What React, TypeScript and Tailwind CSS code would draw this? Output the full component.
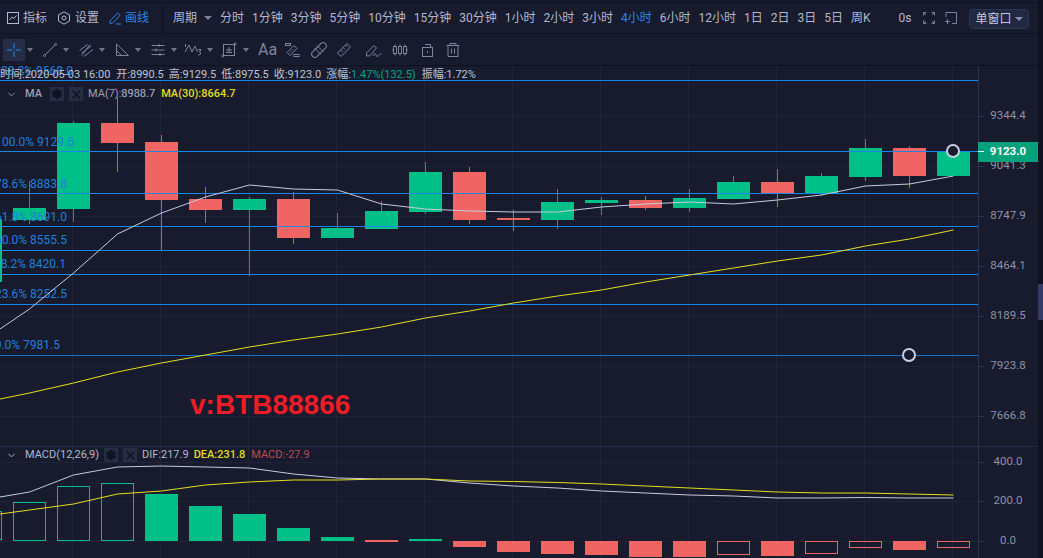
import type { ReactNode } from "react";
import { ChevronDown, Settings, X } from "lucide-react";

const periods = ["分时", "1分钟", "3分钟", "5分钟", "10分钟", "15分钟", "30分钟", "1小时", "2小时", "3小时", "4小时", "6小时", "12小时", "1日", "2日", "3日", "5日", "周K"];

const GREEN = "#00c087";
const RED = "#f06464";
const BLUE = "#1a86ea";
const YELLOW = "#e6de1e";
const WHITE_LINE = "#c8cbdd";

// x, wick top, wick bottom, body top, body bottom, up
const candles: [number, number, number, number, number, boolean][] = [
    [-31, 219, 282, 219, 282, true],
    [13, 181, 224, 208, 220, true],
    [57, 121, 222, 123, 209, true],
    [101, 97, 172, 123, 143, false],
    [145, 135, 250, 142, 200, false],
    [189, 187, 223, 199, 210, false],
    [233, 197, 276, 199, 210, true],
    [277, 192, 244, 199, 238, false],
    [321, 213, 238, 228, 238, true],
    [365, 201, 229, 211, 229, true],
    [409, 162, 214, 172, 212, true],
    [453, 167, 224, 172, 220, false],
    [497, 210, 231, 218, 220, false],
    [541, 189, 229, 202, 220, true],
    [585, 197, 215, 200, 203, true],
    [629, 196, 210, 200, 208, false],
    [673, 189, 212, 198, 208, true],
    [717, 176, 199, 182, 199, true],
    [761, 169, 207, 182, 193, false],
    [805, 173, 196, 176, 193, true],
    [849, 139, 181, 148, 177, true],
    [893, 146, 188, 148, 176, false],
    [937, 152, 176, 152, 176, true],
];

const ma7 = "0,329 29.5,309 73.5,273 117.5,234 161.5,213 205.5,197 249.5,185 293.5,189 337.5,190 381.5,204 425.5,209 469.5,211 513.5,212 557.5,212 601.5,207 645.5,204 689.5,202 733.5,204 777.5,200 821.5,195 865.5,186 909.5,184 953.5,176";
const ma30 = "0,399 29.5,393 73.5,383 117.5,372 161.5,363 205.5,355 249.5,347 293.5,340 337.5,334 381.5,327 425.5,318 469.5,311 513.5,303 557.5,296 601.5,290 645.5,282 689.5,275 733.5,268 777.5,261 821.5,255 865.5,246 909.5,239 953.5,230";
const dif = "0,497 29.5,492 73.5,475 117.5,467 161.5,466 205.5,467 249.5,468 293.5,474 337.5,478 381.5,479 425.5,479 469.5,483 513.5,486 557.5,488 601.5,491 645.5,493 689.5,495 733.5,496 777.5,498 821.5,498 865.5,497.5 909.5,498 953.5,498";
const dea = "0,514 29.5,510 73.5,504 117.5,494 161.5,491 205.5,485 249.5,482 293.5,480 337.5,480 381.5,479 425.5,479 469.5,481 513.5,481.5 557.5,482.5 601.5,484 645.5,486 689.5,488 733.5,490 777.5,492 821.5,493 865.5,493 909.5,494 953.5,495";

// x, top, bottom, up, hollow
const macdBars: [number, number, number, boolean, boolean][] = [
    [-31, 511, 540, true, true],
    [13, 502, 541, true, true],
    [57, 486, 541, true, true],
    [101, 483, 541, true, true],
    [145, 494, 541, true, false],
    [189, 506, 541, true, false],
    [233, 514, 541, true, false],
    [277, 528, 541, true, false],
    [321, 537, 541, true, false],
    [365, 540, 542, false, false],
    [409, 539, 541, true, false],
    [453, 541, 547, false, false],
    [497, 541, 552, false, false],
    [541, 541, 554, false, false],
    [585, 541, 555, false, false],
    [629, 541, 557, false, false],
    [673, 541, 557, false, false],
    [717, 541, 555, false, true],
    [761, 541, 556, false, false],
    [805, 541, 554, false, true],
    [849, 541, 548, false, true],
    [893, 541, 550, false, false],
    [937, 541, 548, false, true],
];

const fibLines = [80.5, 151.5, 193.5, 226.5, 250.5, 274.5, 304.5, 355.5];
const fibLabels: [string, number, number][] = [
    ["38.2% 9568.0", 73, 75],
    ["100.0% 9129.5", 74, 146],
    ["78.6% 8883.8", 67, 188],
    ["61.8% 8691.0", 67, 221],
    ["50.0% 8555.5", 67, 244],
    ["38.2% 8420.1", 66, 268],
    ["23.6% 8252.5", 67, 298],
    ["0.0% 7981.5", 60, 349],
];
const gridX = [72.5, 160.5, 248.5, 336.5, 424.5, 512.5, 600.5, 688.5, 776.5, 864.5, 952.5];
const priceTicks: [string, number][] = [["9344.4", 116], ["9041.3", 166], ["8747.9", 216], ["8464.1", 266], ["8189.5", 316], ["7923.8", 366], ["7666.8", 416]];
const macdTicks: [string, number][] = [["400.0", 462], ["200.0", 501], ["0.0", 541]];

const Icon = ({ children, className = "" }: { children: ReactNode; className?: string }) => (
    <svg viewBox="0 0 16 16" fill="none" stroke="currentColor" strokeWidth="1" className={`h-4 w-4 shrink-0 ${className}`}>
        {children}
    </svg>
);

const Caret = ({ className = "" }: { className?: string }) => (
    <span className={`h-0 w-0 border-x-[4px] border-t-[4px] border-x-transparent border-t-[#7d8199] ${className}`} />
);

const TopBar = () => (
    <div className="mt-[2px] flex h-8 shrink-0 items-center border-y border-[#0e1120] text-xs text-[#b3b8d0]">
        <div className="flex h-full w-[163px] shrink-0 items-center border-r border-[#0e1120] pl-[5px]">
            <div className="flex items-center gap-[2px]">
                <Icon>
                    <rect x="2.5" y="2.5" width="11" height="11" />
                    <path d="M4.5 10l2.5-3 2 1.500 2.500-3" />
                </Icon>
                <span>指标</span>
            </div>
            <div className="ml-[9px] flex items-center gap-[3px]">
                <Icon>
                    <path d="M8 1.800l5.500 3.100v6.200L8 14.200l-5.500-3.100V4.900z" />
                    <circle cx="8" cy="8" r="2" />
                </Icon>
                <span>设置</span>
            </div>
            <div className="ml-[8px] flex items-center gap-[2px] text-[#2e86e8]">
                <Icon>
                    <path d="M3 11l7.500-8 2.500 2.300-7.500 8H3zM9 14h5" />
                </Icon>
                <span>画线</span>
            </div>
        </div>
        <div className="ml-[10px] flex items-center">
            <span>周期</span>
            <Caret className="ml-[7px] mr-2" />
            <div className="flex items-center gap-2">
                {periods.map((p) => (
                    <span key={p} className={p === "4小时" ? "text-[#2e86e8]" : ""}>{p}</span>
                ))}
            </div>
        </div>
        <span className="ml-[28px]">0s</span>
        <Icon className="ml-[9px] text-[#7d8199]">
            <path d="M2.500 5.500v-3h3M10.500 2.500h3v3M13.500 10.500v3h-3M5.500 13.500h-3v-3" />
            <path d="M3 3l2 2M13 3l-2 2M13 13l-2-2M3 13l2-2" />
        </Icon>
        <Icon className="ml-[6px] text-[#7d8199]">
            <path d="M3 7V2.500h10.500v11H9M2 11.500h5M4.500 9v5" />
        </Icon>
        <div className="ml-[10px] mt-[1px] flex h-5 w-[60px] items-center rounded-sm border border-[#2c3553] bg-[#212842] pl-[6px] text-[#c3c7da]">
            <span>单窗口</span>
            <Caret className="ml-[3px] border-t-[#8a8ea8]" />
        </div>
    </div>
);

const Tool = ({ children, w, caret = 0 }: { children: ReactNode; w: number; caret?: number }) => (
    <div style={{ width: w }} className="flex shrink-0 items-center text-[#80849e]">
        {children}
        {caret > 0 && (
            <span style={{ marginLeft: caret }} className="h-0 w-0 border-x-[3px] border-t-[4px] border-x-transparent border-t-[#6f738c]" />
        )}
    </div>
);

const ToolBar = () => (
    <div className="flex h-8 shrink-0 items-center border-b border-[#0e1120] pl-[3px]">
        <Tool w={39} caret={2}>
            <div className="flex h-[22px] w-[22px] items-center justify-center bg-[#252d47] text-[#2e86e8]">
                <Icon>
                    <path d="M8 1v5.500M8 9.500V15M1 8h5.500M9.500 8H15" />
                </Icon>
            </div>
        </Tool>
        <Tool w={36} caret={5}>
            <Icon>
                <path d="M3.200 12.800l9.600-9.600" />
                <circle cx="2.500" cy="13.500" r="1" />
                <circle cx="13.500" cy="2.500" r="1" />
            </Icon>
        </Tool>
        <Tool w={36} caret={5}>
            <Icon>
                <path d="M1.500 8.500l8-6M4 11l9-7M6 14.500l9-7M3.500 13.500l8.500-11" />
            </Icon>
        </Tool>
        <Tool w={36} caret={5}>
            <Icon>
                <path d="M2.500 2v11.500h12zM2.500 8.500l5 5" />
            </Icon>
        </Tool>
        <Tool w={34} caret={5}>
            <Icon>
                <path d="M1.500 3.500h13M1.500 8h13M1.500 12.500h13M9 2v3M6 6.500v3M10 11v3" />
            </Icon>
        </Tool>
        <Tool w={37} caret={5}>
            <svg viewBox="0 0 18 16" fill="none" stroke="currentColor" className="h-4 w-[18px] shrink-0">
                <path d="M1.500 5V2M1 10l4-7 3 7 3-6 2.500 6" />
                <path d="M14 7.500h3l-1.500 2.500c1.500 0 1.500 3-.5 3l-1-.5" />
            </svg>
        </Tool>
        <Tool w={36} caret={6}>
            <Icon>
                <rect x="2.500" y="2.500" width="11" height="11" />
                <path d="M8 5v6M5 8h6M5 10.500h6" />
                <circle cx="14" cy="2" r="1" />
                <circle cx="2" cy="14" r="1" />
            </Icon>
        </Tool>
        <div className="ml-[1px] w-[26px] shrink-0 text-base text-[#80849e]">Aa</div>
        <Tool w={27}>
            <Icon>
                <rect x="1.500" y="1.500" width="5" height="2" />
                <rect x="10" y="12.500" width="5" height="2" />
                <path d="M3 10.500L10 3.500l3 3L6 13.500zM6 10.500l1-1M8 8.500l1-1" />
            </Icon>
        </Tool>
        <Tool w={25}>
            <Icon>
                <rect x="-1" y="4.800" width="18" height="6.400" rx="3.200" transform="rotate(-45 8 8)" />
                <path d="M6 3.500l6.500 6.500M3.500 6L10 12.500" />
            </Icon>
        </Tool>
        <Tool w={29}>
            <Icon>
                <path d="M1.500 11L11 1.500 14.500 5 5 14.500zM4.500 8l2 2M7 5.500l2 2M9.500 3l2 2" />
            </Icon>
        </Tool>
        <Tool w={27}>
            <svg viewBox="0 0 18 16" fill="none" stroke="currentColor" className="h-4 w-[18px] shrink-0">
                <path d="M1.500 14V11L9 3.500 11.500 6 4.500 14zM8 14c1-3 2.500-3 3-1s1.500 2 2.500.5 1.500-1.500 3-1.500" />
            </svg>
        </Tool>
        <Tool w={28}>
            <Icon>
                <rect x="1.500" y="4.500" width="3" height="7" />
                <rect x="6.500" y="4.500" width="3" height="7" />
                <rect x="11.500" y="4.500" width="3" height="7" />
                <path d="M3 2.500v2M3 11.500v2M8 2.500v2M8 11.500v2M13 2.500v2M13 11.500v2M0 8h1.500M14.500 8H16" />
            </Icon>
        </Tool>
        <Tool w={25}>
            <Icon>
                <rect x="2.500" y="5.500" width="10" height="9" />
                <path d="M5 2.500h5.500v3" />
                <path d="M7.500 9v2" />
            </Icon>
        </Tool>
        <Tool w={20}>
            <Icon>
                <path d="M1.500 3.500h13M5 3.500V1.500h6v2M3 3.500v11h10v-11M6.500 6.500v5M9.500 6.500v5" />
            </Icon>
        </Tool>
    </div>
);

const LegendBox = ({ children }: { children: ReactNode }) => (
    <span className="flex h-[14px] w-[14px] items-center justify-center bg-[#252c43] text-[#0f1322]">{children}</span>
);

const MainLegend = () => (
    <div className="absolute left-[6px] top-[21px] flex h-[14px] items-center text-[11px] text-[#9b9fb5]">
        <ChevronDown size={11} />
        <span className="ml-[8px] w-[25px] font-medium">MA</span>
        <LegendBox><Settings size={12} fill="currentColor" /></LegendBox>
        <span className="ml-[5px]" />
        <LegendBox><X size={13} strokeWidth={3} /></LegendBox>
        <span className="ml-[5px]">MA(7):</span>
        <span className="relative">
            8988.7
            <span className="absolute left-0 top-0 opacity-70">8938.7</span>
        </span>
        <span className="ml-[6px] font-medium text-[#e3db1c]">MA(30):8664.7</span>
    </div>
);

const MacdLegend = () => (
    <div className="absolute left-[6px] top-0 flex h-4 items-center text-[11px] text-[#b3b7cc]">
        <ChevronDown size={11} />
        <span className="ml-[8px]">MACD(12,26,9)</span>
        <span className="ml-[5px]" />
        <LegendBox><Settings size={12} fill="currentColor" /></LegendBox>
        <span className="ml-[5px]" />
        <LegendBox><X size={13} strokeWidth={3} /></LegendBox>
        <span className="ml-[5px]">DIF:217.9</span>
        <span className="ml-[5px] font-medium text-[#e3db1c]">DEA:231.8</span>
        <span className="ml-[6px] text-[#bc4c50]">MACD:-27.9</span>
    </div>
);

const Grid = ({ rows }: { rows: number[] }) => (
    <g stroke="#1f2437" shapeRendering="crispEdges">
        {gridX.map((x) => <line key={x} x1={x} x2={x} y1={0} y2={558} />)}
        {rows.map((y) => <line key={y} x1={0} x2={978} y1={y + 0.5} y2={y + 0.5} />)}
    </g>
);

const InfoRow = () => (
    <div className="absolute left-0 top-[2px] flex h-[14px] items-center whitespace-nowrap text-[11px] text-[#bfc3d6]">
        <span>时间:2020-05-03 16:00</span>
        <span className="ml-[6px]">开:8990.5</span>
        <span className="ml-[5px]">高:9129.5</span>
        <span className="ml-[5px]">低:8975.5</span>
        <span className="ml-[5px]">收:9123.0</span>
        <span className="ml-[5px]">涨幅:</span>
        <span className="text-[#00a87c]">1.47%(132.5)</span>
        <span className="ml-[6px]">振幅:1.72%</span>
    </div>
);

const MainPane = () => (
    <div className="relative h-[381px] shrink-0 border-b border-[#262d45]">
        <svg viewBox="0 66 1038 380" className="block h-[380px] w-full">
            <Grid rows={priceTicks.map((t) => t[1])} />
            <g shapeRendering="crispEdges">
                {candles.map(([x, wt, wb, bt, bb, up]) => (
                    <g key={x} fill={up ? GREEN : RED}>
                        <rect x={x + 16} y={wt} width="1" height={wb - wt} opacity="0.85" />
                        <rect x={x} y={bt} width="33" height={bb - bt} />
                    </g>
                ))}
            </g>
            {fibLabels.map(([label, x, y]) => (
                <text key={label + y} x={x} y={y} textAnchor="end" fontSize="12" fill="#1f7fdc">{label}</text>
            ))}
            <g shapeRendering="crispEdges">
                {fibLines.map((y, i) => (
                    <line key={y} x1={0} x2={978} y1={y} y2={y} stroke={BLUE} opacity={i === 7 ? 0.8 : 1} />
                ))}
            </g>
            <polyline points={ma7} fill="none" stroke={WHITE_LINE} strokeWidth="1" />
            <polyline points={ma30} fill="none" stroke={YELLOW} strokeWidth="1" />
            <circle cx="953" cy="151" r="6" fill="#171b2d" stroke="#c9cfe3" strokeWidth="2" />
            <circle cx="909" cy="355" r="6" fill="#171b2d" stroke="#c9cfe3" strokeWidth="2" />
            <line x1="978.500" x2="978.500" y1={66} y2={446} stroke="#2a3350" />
            {priceTicks.map(([label, y]) => (
                <g key={label}>
                    <line x1="979" x2="984" y1={y + 0.5} y2={y + 0.5} stroke="#2a3350" />
                    <text x="1008" y={y + 3} textAnchor="middle" fontSize="11.500" fill="#8d91a9">{label}</text>
                </g>
            ))}
            <rect x="978" y="142" width="60" height="20" fill="#03a27a" />
            <rect x="978" y="151" width="6" height="1" fill="#fff" />
            <text x="1008" y="155" textAnchor="middle" fontSize="11.500" fontWeight="700" fill="#fff">9123.0</text>
        </svg>
        <InfoRow />
        <MainLegend />
        <div className="absolute left-[190px] top-[322px] font-['Liberation_Sans',sans-serif] text-[28px] font-bold leading-[34px] text-[#ee1c25]">v:BTB88866</div>
    </div>
);

const MacdPane = () => (
    <div className="relative flex-1">
        <svg viewBox="0 447 1038 111" className="block h-[111px] w-full">
            <Grid rows={macdTicks.map((t) => t[1])} />
            <g shapeRendering="crispEdges">
                {macdBars.map(([x, top, bottom, up, hollow]) =>
                    hollow ? (
                        <rect key={x} x={x + 0.5} y={top + 0.5} width="32" height={bottom - top - 1} fill="none" stroke={up ? GREEN : RED} />
                    ) : (
                        <rect key={x} x={x} y={top} width="33" height={bottom - top} fill={up ? GREEN : RED} />
                    )
                )}
            </g>
            <polyline points={dif} fill="none" stroke={WHITE_LINE} strokeWidth="1" />
            <polyline points={dea} fill="none" stroke={YELLOW} strokeWidth="1" />
            <line x1="978.500" x2="978.500" y1={447} y2={558} stroke="#2a3350" />
            {macdTicks.map(([label, y]) => (
                <g key={label}>
                    <line x1="979" x2="984" y1={y + 0.5} y2={y + 0.5} stroke="#2a3350" />
                    <text x="1008" y={y + 3} textAnchor="middle" fontSize="11.500" fill="#8d91a9">{label}</text>
                </g>
            ))}
        </svg>
        <MacdLegend />
    </div>
);

export default function App() {
    return (
        <div className="flex h-[558px] w-[1043px] overflow-hidden bg-[#171b2d] font-['Roboto','Noto_Sans_CJK_SC',sans-serif]">
            <div className="flex w-[1038px] shrink-0 flex-col">
                <TopBar />
                <ToolBar />
                <MainPane />
                <MacdPane />
            </div>
            <div className="relative w-[5px] bg-[#10131f]">
                <div className="absolute left-0 top-[284px] h-9 w-[5px] bg-[#343a66]" />
            </div>
        </div>
    );
}
